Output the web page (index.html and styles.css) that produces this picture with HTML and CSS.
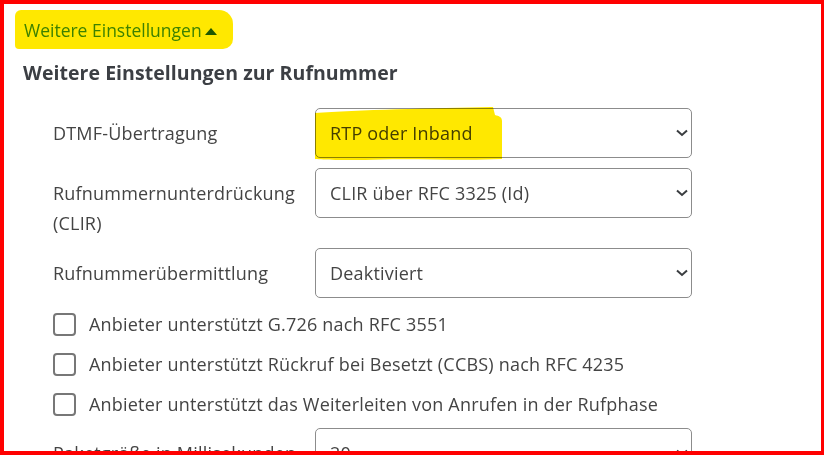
FILE: index.html
```html
<!DOCTYPE html>
<html lang="de">
<head>
<meta charset="utf-8">
<title>Weitere Einstellungen</title>
<link rel="stylesheet" href="styles.css">
</head>
<body>
<div class="frame">
  <div class="toggle">
    <span class="marker marker-toggle"></span>
    <a class="toggle-link" href="#">Weitere Einstellungen<svg class="tri" width="12" height="7" viewBox="0 0 12 7"><path d="M0 7 L6 0 L12 7 Z" fill="currentColor"/></svg></a>
  </div>
  <h2 class="heading">Weitere Einstellungen zur Rufnummer</h2>
  <div class="form">
    <div class="row">
      <label class="lbl">DTMF-Übertragung</label>
      <div class="sel">
        <select><option>RTP oder Inband</option></select>
        <svg class="chev" width="12" height="8" viewBox="0 0 12 8"><path d="M1 1.5 L6 6 L11 1.5" fill="none" stroke="#3a3d40" stroke-width="2"/></svg>
        <svg class="marker marker-sel" width="190" height="54" viewBox="0 0 190 54"><path d="M0 6 C40 3 120 1 176 0 L178 0 L180 8 C184 9 187 10 187 14 L187 52 C150 54 90 51 50 53 C30 53 8 53 0 52 Z" fill="#ffe800"/></svg>
      </div>
    </div>
    <div class="row">
      <label class="lbl">Rufnummernunterdrückung (CLIR)</label>
      <div class="sel">
        <select><option>CLIR über RFC 3325 (Id)</option></select>
        <svg class="chev" width="12" height="8" viewBox="0 0 12 8"><path d="M1 1.5 L6 6 L11 1.5" fill="none" stroke="#3a3d40" stroke-width="2"/></svg>
      </div>
    </div>
    <div class="row">
      <label class="lbl">Rufnummerübermittlung</label>
      <div class="sel">
        <select><option>Deaktiviert</option></select>
        <svg class="chev" width="12" height="8" viewBox="0 0 12 8"><path d="M1 1.5 L6 6 L11 1.5" fill="none" stroke="#3a3d40" stroke-width="2"/></svg>
      </div>
    </div>
    <div class="checks">
      <label class="check"><span class="box"></span>Anbieter unterstützt G.726 nach RFC 3551</label>
      <label class="check"><span class="box"></span>Anbieter unterstützt Rückruf bei Besetzt (CCBS) nach RFC 4235</label>
      <label class="check"><span class="box"></span>Anbieter unterstützt das Weiterleiten von Anrufen in der Rufphase</label>
    </div>
    <div class="row">
      <label class="lbl">Paketgröße in Millisekunden</label>
      <div class="sel">
        <select><option>20</option></select>
        <svg class="chev" width="12" height="8" viewBox="0 0 12 8"><path d="M1 1.5 L6 6 L11 1.5" fill="none" stroke="#3a3d40" stroke-width="2"/></svg>
      </div>
    </div>
  </div>
</div>
</body>
</html>
```
FILE: styles.css
```css
html, body {
  margin: 0;
  padding: 0;
  background: #fff;
}
body {
  font-family: "Open Sans", Lato, sans-serif;
  color: #444;
  font-size: 18px;
  letter-spacing: 0.2px;
}
.frame {
  position: relative;
  box-sizing: border-box;
  height: 455px;
  width: 824px;
  border-style: solid;
  border-color: #ff0000;
  border-width: 4px 3px 4px 4px;
  padding-top: 12px;
  overflow: hidden;
}
.toggle {
  position: relative;
  padding-left: 20px;
  line-height: 28px;
  height: 28px;
  letter-spacing: 0;
  font-size: 17.5px;
}
.toggle-link {
  position: relative;
  color: #3d8fd0;
  text-decoration: none;
  mix-blend-mode: multiply;
}
.tri {
  margin-left: 3px;
  vertical-align: 2px;
  color: #1f5f00;
}
.marker {
  position: absolute;
  mix-blend-mode: multiply;
  pointer-events: none;
}
.marker-toggle {
  left: 11px;
  top: -6px;
  width: 218px;
  height: 39px;
  background: #ffe800;
  border-radius: 6px 14px 10px 4px;
}
.heading {
  margin: 15px 0 0 19px;
  font-size: 19.5px;
  font-weight: 700;
  line-height: 28px;
  letter-spacing: 0.05px;
  color: #3c3f44;
}
.form {
  margin-top: 21px;
  padding-left: 49px;
}
.row {
  display: flex;
  margin-top: 10px;
}
.row:first-child {
  margin-top: 0;
}
.lbl {
  width: 250px;
  padding: 10px 12px 0 0;
  line-height: 30px;
}
.sel {
  position: relative;
  width: 377px;
  height: 50px;
}
.sel select {
  -webkit-appearance: none;
  appearance: none;
  box-sizing: border-box;
  width: 100%;
  height: 100%;
  margin: 0;
  padding: 0 30px 0 14px;
  border: 1px solid #8c8c8c;
  border-radius: 5px;
  background: #fff;
  font-family: inherit;
  font-size: 18px;
  letter-spacing: 0.2px;
  color: #444;
}
.chev {
  position: absolute;
  right: 4px;
  top: 21px;
}
.marker-sel {
  left: 0;
  top: -1px;
}
.checks {
  margin-top: 6px;
}
.checks + .row {
  margin-top: 4px;
}
.check {
  display: flex;
  align-items: center;
  height: 40px;
  line-height: 30px;
}
.box {
  box-sizing: border-box;
  width: 23px;
  height: 23px;
  border: 2px solid #777;
  border-radius: 4px;
  margin-right: 13px;
  flex: none;
}
```
